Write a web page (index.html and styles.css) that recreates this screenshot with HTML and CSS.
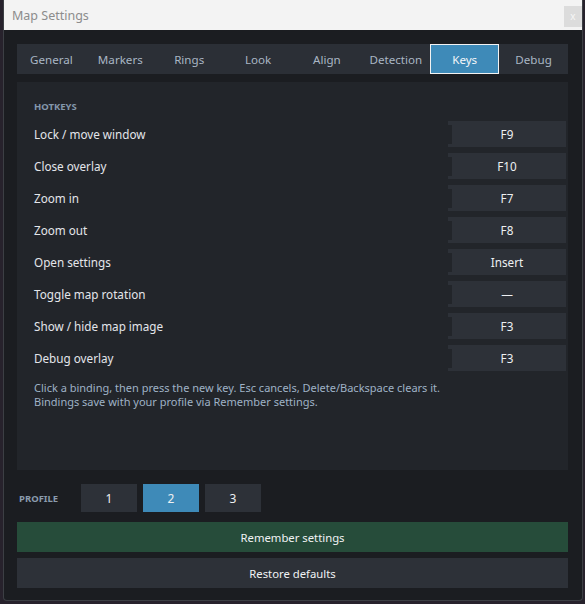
FILE: index.html
```html
<!DOCTYPE html>
<html lang="en">
<head>
    <meta charset="UTF-8">
    <title>Map Settings</title>
    <link rel="stylesheet" href="styles.css">
</head>
<body>

<div class="window">
    <div class="titlebar">
        <span class="title">Map Settings</span>
        <div class="close-btn">x</div>
    </div>

    <div class="window-body">
        <div class="tabs">
            <div class="tab">General</div>
            <div class="tab">Markers</div>
            <div class="tab">Rings</div>
            <div class="tab">Look</div>
            <div class="tab">Align</div>
            <div class="tab">Detection</div>
            <div class="tab active">Keys</div>
            <div class="tab">Debug</div>
        </div>

        <div class="panel">
            <div class="section-title">HOTKEYS</div>

            <div class="key-row">
                <span>Lock / move window</span>
                <div class="key-btn">F9</div>
            </div>
            <div class="key-row">
                <span>Close overlay</span>
                <div class="key-btn">F10</div>
            </div>
            <div class="key-row">
                <span>Zoom in</span>
                <div class="key-btn">F7</div>
            </div>
            <div class="key-row">
                <span>Zoom out</span>
                <div class="key-btn">F8</div>
            </div>
            <div class="key-row">
                <span>Open settings</span>
                <div class="key-btn">Insert</div>
            </div>
            <div class="key-row">
                <span>Toggle map rotation</span>
                <div class="key-btn">&mdash;</div>
            </div>
            <div class="key-row">
                <span>Show / hide map image</span>
                <div class="key-btn">F3</div>
            </div>
            <div class="key-row">
                <span>Debug overlay</span>
                <div class="key-btn">F3</div>
            </div>

            <p class="hint">Click a binding, then press the new key. Esc cancels, Delete/Backspace clears it.<br>Bindings save with your profile via Remember settings.</p>
        </div>

        <div class="profile-row">
            <span class="profile-label">PROFILE</span>
            <div class="profile-btn">1</div>
            <div class="profile-btn active">2</div>
            <div class="profile-btn">3</div>
        </div>

        <div class="wide-btn remember">Remember settings</div>
        <div class="wide-btn restore">Restore defaults</div>
    </div>
</div>

</body>
</html>
```

FILE: styles.css
```css
html {
    background-color: #27222c;
}

body {
    font-family: 'Noto Sans', 'Segoe UI', sans-serif;
    margin: 0;
    padding: 0;
    color: #e4e6ea;
}

.window {
    margin-left: 3px;
    width: 578px;
    height: 600px;
    background-color: #1b1d21;
    border: 1px solid #3c3f44;
    border-top: none;
    border-radius: 0 0 4px 4px;
    display: flex;
    flex-direction: column;
}

.titlebar {
    height: 30px;
    background-color: #f3f3f3;
    display: flex;
    align-items: center;
    justify-content: space-between;
    padding-left: 8px;
    flex-shrink: 0;
}

.title {
    font-size: 12.5px;
    color: #8c8c8c;
}

.close-btn {
    width: 18px;
    height: 21px;
    margin-top: 2px;
    background-color: #dcdcdc;
    color: #f6f6f6;
    font-size: 10px;
    display: flex;
    align-items: center;
    justify-content: center;
}

.window-body {
    flex: 1;
    padding: 14px 14px 12px 13px;
    display: flex;
    flex-direction: column;
}

.tabs {
    display: grid;
    grid-template-columns: repeat(8, 1fr);
    height: 30px;
    background-color: #2b2f36;
}

.tab {
    display: flex;
    align-items: center;
    justify-content: center;
    font-size: 11.6px;
    color: #a9b6c4;
}

.tab.active {
    background-color: #3e8ab8;
    border: 1px solid #f2f2f2;
    color: #f4f6f8;
}

.panel {
    margin-top: 8px;
    height: 388px;
    box-sizing: border-box;
    background-color: #22252a;
    padding: 18px 2px 0 17px;
}

.section-title {
    font-size: 9.5px;
    font-weight: bold;
    color: #8497ab;
    line-height: 14px;
    margin-bottom: 7px;
}

.key-row {
    display: flex;
    align-items: center;
    justify-content: space-between;
    height: 26px;
    margin-bottom: 6px;
    font-size: 11.7px;
    color: #e4e6ea;
}

.key-row span {
    margin-top: -1px;
}

.key-btn {
    position: relative;
    width: 118px;
    height: 26px;
    background-color: #2d3138;
    display: flex;
    align-items: center;
    justify-content: center;
    font-size: 11.7px;
    color: #eef0f2;
}

/* notch on the left edge of each binding */
.key-btn::before {
    content: "";
    position: absolute;
    left: 0;
    top: 4px;
    bottom: 3px;
    width: 4px;
    background-color: #22252a;
}

.hint {
    margin: 10px 0 0 0;
    font-size: 11px;
    line-height: 14px;
    color: #9fb2c6;
}

.profile-row {
    display: flex;
    align-items: center;
    gap: 6px;
    margin-top: 14px;
    height: 28px;
}

.profile-label {
    font-size: 9.5px;
    font-weight: bold;
    color: #8a9bad;
    width: 56px;
    padding-left: 2px;
}

.profile-btn {
    width: 56px;
    height: 28px;
    background-color: #2d3138;
    display: flex;
    align-items: center;
    justify-content: center;
    font-size: 12px;
    color: #eef0f2;
}

.profile-btn.active {
    background-color: #3e8ab8;
}

.wide-btn {
    height: 30px;
    display: flex;
    align-items: center;
    justify-content: center;
    font-size: 11.3px;
    color: #f0f2f4;
}

.remember {
    margin-top: 10px;
    background-color: #264c3a;
}

.restore {
    margin-top: 6px;
    background-color: #2d3138;
}
```
